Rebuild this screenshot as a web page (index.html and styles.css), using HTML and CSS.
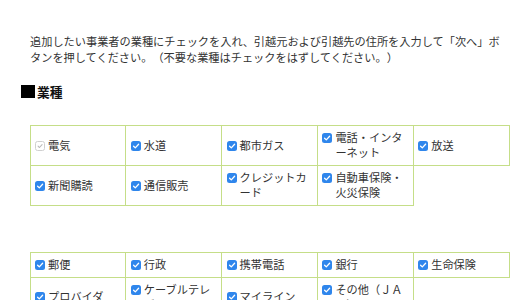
FILE: index.html
```html
<!DOCTYPE html>
<html lang="ja">
<head>
<meta charset="utf-8">
<link rel="stylesheet" href="styles.css">
</head>
<body>
<div class="page">
  <p class="lead">追加したい事業者の業種にチェックを入れ、引越元および引越先の住所を入力して「次へ」ボタンを押してください。（不要な業種はチェックをはずしてください。）</p>
  <h2 class="sec"><span class="sq"></span>業種</h2>
  <table class="grid first">
    <tr>
      <td><div class="item"><span class="cb off"><svg viewBox="0 0 10 10"><path d="M2.6 5.2 4.3 6.9 7.6 3.2"/></svg></span><span class="lbl">電気</span></div></td>
      <td><div class="item"><span class="cb"><svg viewBox="0 0 10 10"><path d="M2.6 5.2 4.3 6.9 7.6 3.2"/></svg></span><span class="lbl">水道</span></div></td>
      <td><div class="item"><span class="cb"><svg viewBox="0 0 10 10"><path d="M2.6 5.2 4.3 6.9 7.6 3.2"/></svg></span><span class="lbl">都市ガス</span></div></td>
      <td><div class="item"><span class="cb"><svg viewBox="0 0 10 10"><path d="M2.6 5.2 4.3 6.9 7.6 3.2"/></svg></span><span class="lbl">電話・インターネット</span></div></td>
      <td><div class="item"><span class="cb"><svg viewBox="0 0 10 10"><path d="M2.6 5.2 4.3 6.9 7.6 3.2"/></svg></span><span class="lbl">放送</span></div></td>
    </tr>
    <tr>
      <td><div class="item"><span class="cb"><svg viewBox="0 0 10 10"><path d="M2.6 5.2 4.3 6.9 7.6 3.2"/></svg></span><span class="lbl">新聞購読</span></div></td>
      <td><div class="item"><span class="cb"><svg viewBox="0 0 10 10"><path d="M2.6 5.2 4.3 6.9 7.6 3.2"/></svg></span><span class="lbl">通信販売</span></div></td>
      <td><div class="item"><span class="cb"><svg viewBox="0 0 10 10"><path d="M2.6 5.2 4.3 6.9 7.6 3.2"/></svg></span><span class="lbl">クレジットカード</span></div></td>
      <td><div class="item"><span class="cb"><svg viewBox="0 0 10 10"><path d="M2.6 5.2 4.3 6.9 7.6 3.2"/></svg></span><span class="lbl">自動車保険・火災保険</span></div></td>
    </tr>
  </table>
  <table class="grid second">
    <tr>
      <td><div class="item"><span class="cb"><svg viewBox="0 0 10 10"><path d="M2.6 5.2 4.3 6.9 7.6 3.2"/></svg></span><span class="lbl">郵便</span></div></td>
      <td><div class="item"><span class="cb"><svg viewBox="0 0 10 10"><path d="M2.6 5.2 4.3 6.9 7.6 3.2"/></svg></span><span class="lbl">行政</span></div></td>
      <td><div class="item"><span class="cb"><svg viewBox="0 0 10 10"><path d="M2.6 5.2 4.3 6.9 7.6 3.2"/></svg></span><span class="lbl">携帯電話</span></div></td>
      <td><div class="item"><span class="cb"><svg viewBox="0 0 10 10"><path d="M2.6 5.2 4.3 6.9 7.6 3.2"/></svg></span><span class="lbl">銀行</span></div></td>
      <td><div class="item"><span class="cb"><svg viewBox="0 0 10 10"><path d="M2.6 5.2 4.3 6.9 7.6 3.2"/></svg></span><span class="lbl">生命保険</span></div></td>
    </tr>
    <tr>
      <td><div class="item"><span class="cb"><svg viewBox="0 0 10 10"><path d="M2.6 5.2 4.3 6.9 7.6 3.2"/></svg></span><span class="lbl">プロバイダ</span></div></td>
      <td><div class="item"><span class="cb"><svg viewBox="0 0 10 10"><path d="M2.6 5.2 4.3 6.9 7.6 3.2"/></svg></span><span class="lbl">ケーブルテレビ</span></div></td>
      <td><div class="item"><span class="cb"><svg viewBox="0 0 10 10"><path d="M2.6 5.2 4.3 6.9 7.6 3.2"/></svg></span><span class="lbl">マイライン</span></div></td>
      <td><div class="item"><span class="cb"><svg viewBox="0 0 10 10"><path d="M2.6 5.2 4.3 6.9 7.6 3.2"/></svg></span><span class="lbl">その他（ＪＡＦ）</span></div></td>
    </tr>
  </table>
</div>
</body>
</html>
```

FILE: styles.css
```css
html, body {
  margin: 0;
  padding: 0;
  background: #ffffff;
}

body {
  font-family: "Noto Sans CJK JP", "Noto Sans", sans-serif;
  font-size: 11.2px;
  line-height: 15.7px;
  color: #333333;
  text-spacing-trim: space-all;
}

.page {
  padding: 34px 0 0 21px;
}

.lead {
  margin: 0 0 0 9px;
  width: 480px;
  line-break: loose;
}

.sec {
  margin: 18.5px 0 0 0;
  display: flex;
  align-items: center;
  font-size: 12.8px;
  line-height: 16px;
  font-weight: bold;
  color: #111111;
}

.sq {
  display: inline-block;
  width: 14px;
  height: 13px;
  background: #000000;
  margin-right: 2px;
}

.grid {
  border-collapse: collapse;
  table-layout: fixed;
  width: 480px;
  margin-left: 8.5px;
}

.grid.first {
  margin-top: 25px;
}

.grid.second {
  margin-top: 46.5px;
}

.grid td {
  width: 20%;
  border: 1px solid #c5de88;
  padding: 3.8px 4.5px;
  vertical-align: middle;
}

.item {
  display: flex;
  align-items: flex-start;
  gap: 3px;
}

.lbl {
  line-break: loose;
  min-width: 0;
}

.cb {
  flex: none;
  width: 10px;
  height: 10px;
  margin-top: 3px;
  border-radius: 2.5px;
  background: #2f86ec;
  display: block;
  box-sizing: border-box;
}

.cb svg {
  display: block;
  width: 10px;
  height: 10px;
  fill: none;
  stroke: #ffffff;
  stroke-width: 1.3;
  stroke-linecap: round;
  stroke-linejoin: round;
}

.cb.off {
  background: #ffffff;
  border: 1px solid #d0d0d0;
}

.cb.off svg {
  width: 8px;
  height: 8px;
  stroke: #b8b8b8;
}
```
